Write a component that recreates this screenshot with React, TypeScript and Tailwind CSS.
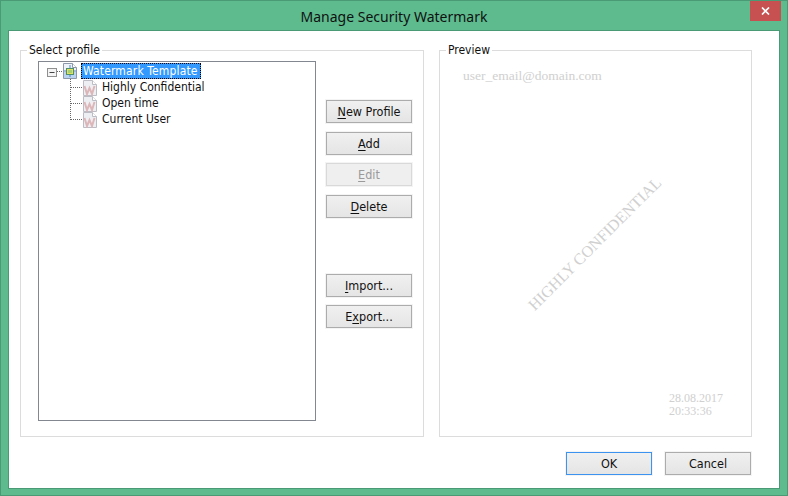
import React from "react";

const font = { fontFamily: '"DejaVu Sans Condensed", "DejaVu Sans", sans-serif' };
const serif = { fontFamily: '"Liberation Serif", serif' };

function Btn({ label, u, rest, pre = "", disabled = false, primary = false, className = "" }: { label?: string; u?: string; rest?: string; pre?: string; disabled?: boolean; primary?: boolean; className?: string }) {
  const tone = disabled
    ? "border-[#d9d9d9] bg-[#efefef] text-[#9a9a9a]"
    : primary
    ? "border-[#3c94f0] bg-gradient-to-b from-[#f0f0f0] to-[#e5e5e5] text-[#111]"
    : "border-[#acacac] bg-gradient-to-b from-[#f0f0f0] to-[#e5e5e5] text-[#111]";
  return (
    <div className={`flex h-[23px] w-[86px] shrink-0 items-center justify-center border pt-[1px] text-[12.5px] shadow-[0_0_0_1px_#f4f4f4] ${tone} ${className}`}>
      {label ? label : (<span>{pre}<span className="underline underline-offset-2">{u}</span>{rest}</span>)}
    </div>
  );
}

function DocW() {
  return (
    <svg width="14" height="16" viewBox="0 0 14 16" className="mt-[1px] shrink-0">
      <path d="M.5.5H9.5L13.5 4.5V15.5H.5Z" fill="#eeeff3" stroke="#bcbcc4" />
      <path d="M9.5.5V4.5H13.5" fill="#fff" stroke="#bcbcc4" />
      <path d="M1.5 6L4 14L6.5 8L9 14L11.5 6" fill="none" stroke="#dcb6b9" strokeWidth="2" />
    </svg>
  );
}

function RootIcon() {
  return (
    <svg width="14" height="16" viewBox="0 0 14 16" className="shrink-0">
      <path d="M.5.5H9.5L13.5 4.5V15.5H.5Z" fill="#eef3fa" stroke="#8d98ab" />
      <path d="M1 9H13V15H1Z" fill="#b9d3f0" />
      <path d="M9.5.5V4.5H13.5" fill="#fff" stroke="#8d98ab" />
      <path d="M7 2V14M1 8H13" stroke="#4f87cf" />
      <rect x="3.5" y="5.5" width="7" height="6" fill="#e6e05a" stroke="#4f8f6c" />
      <rect x="5" y="7" width="4" height="3" fill="#a8d070" />
    </svg>
  );
}

function Tree() {
  return (
    <div className="relative h-[360px] w-[278px] shrink-0 border border-[#828790] bg-white text-[12px] text-[#111]">
      <svg width="60" height="70" className="absolute left-0 top-0">
        <g stroke="#666" strokeDasharray="1 1" fill="none">
          <path d="M18 9.5H24" />
          <path d="M31.5 17V58" />
          <path d="M32 25.5H43M32 41.5H43M32 57.5H43" />
        </g>
        <rect x="8.5" y="6.5" width="9" height="8" fill="#f4f4f4" stroke="#8f8f8f" />
        <path d="M10.5 10.5H15.5" stroke="#444" />
      </svg>
      <div className="flex flex-col pl-[24px] pt-[1px]">
        <div className="flex h-[16px] items-center gap-[4px]">
          <RootIcon />
          <span className="flex h-[16px] w-[120px] items-center border border-dotted border-black bg-[#3399ff] px-[1px] tracking-[0.15px] text-white">Watermark Template</span>
        </div>
        {["Highly Confidential", "Open time", "Current User"].map((t) => (
          <div key={t} className="flex h-[16px] items-center gap-[5px] pl-[20px]">
            <DocW />
            <span>{t}</span>
          </div>
        ))}
      </div>
    </div>
  );
}

function Group({ title, className, children }: { title: string; className: string; children: React.ReactNode }) {
  return (
    <div className={`relative shrink-0 border border-[#dcdcdc] ${className}`}>
      <span className="absolute left-[6px] top-[-8px] bg-white px-[2px] text-[12px] leading-[14px] text-[#111]">{title}</span>
      {children}
    </div>
  );
}

export default function App() {
  return (
    <div style={font} className="relative flex h-[496px] w-[788px] flex-col border border-[#4a9a75] bg-[#5dbb8e]">
      <div className="flex h-[29px] shrink-0 items-center justify-center pt-[1px] text-[14px] text-[#111]" style={{ fontFamily: '"Noto Sans", sans-serif' }}>Manage Security Watermark</div>
      <div className="absolute right-[6px] top-0 flex h-[20px] w-[31px] items-center justify-center bg-[#c75050]">
        <svg width="9" height="8" viewBox="0 0 9 8"><path d="M1 0.5L8 7.5M8 0.5L1 7.5" stroke="#fff" strokeWidth="1.7" /></svg>
      </div>
      <div className="mx-[7px] mb-[6px] flex flex-1 flex-col border border-[#4a9a75] bg-white pl-[11px] pr-[27px] pt-[19px]">
        <div className="flex gap-[15px]">
          <Group title="Select profile" className="h-[387px] w-[404px] pl-[17px] pt-[10px]">
            <div className="flex gap-[10px]">
              <Tree />
              <div className="flex flex-col pt-[39px]">
                <Btn u="N" rest="ew Profile" />
                <Btn u="A" rest="dd" className="mt-[9px]" />
                <Btn u="E" rest="dit" disabled className="mt-[8px]" />
                <Btn u="D" rest="elete" className="mt-[9px]" />
                <Btn u="I" rest="mport..." className="mt-[56px]" />
                <Btn pre="E" u="x" rest="port..." className="mt-[8px]" />
              </div>
            </div>
          </Group>
          <Group title="Preview" className="h-[387px] w-[313px]">
            <div className="absolute left-[23px] top-[15px] text-[13.5px] text-[#d0d0d0]" style={serif}>user_email@domain.com</div>
            <div className="absolute left-[155px] top-[193px] -translate-x-1/2 -translate-y-1/2 -rotate-[45deg] whitespace-nowrap text-[16px] text-[#d0d0d0]" style={serif}>HIGHLY CONFIDENTIAL</div>
            <div className="absolute left-[229px] top-[341px] text-[12px] leading-[13px] text-[#d0d0d0]" style={serif}>28.08.2017<br />20:33:36</div>
          </Group>
        </div>
        <div className="mt-[15px] flex justify-end gap-[13px] pr-[1px]">
          <Btn label="OK" primary />
          <Btn label="Cancel" />
        </div>
      </div>
    </div>
  );
}
